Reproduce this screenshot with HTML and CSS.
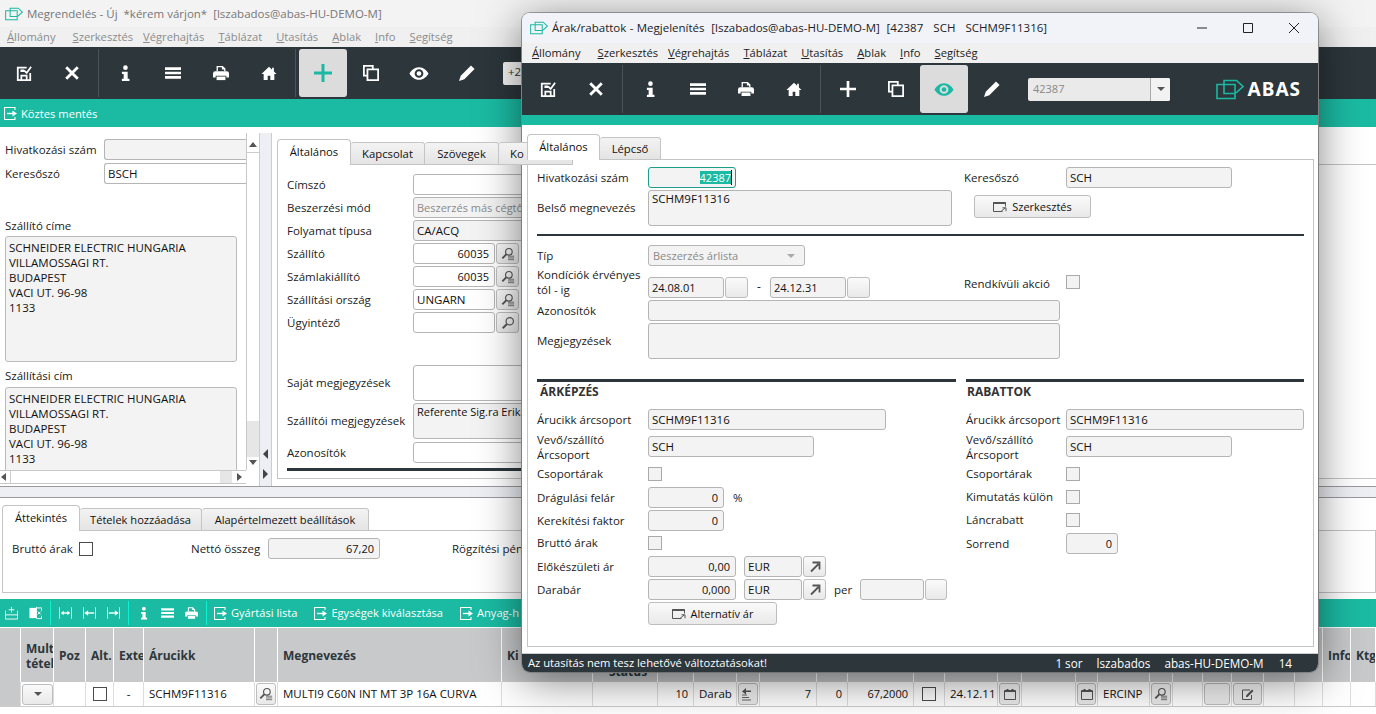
FILE: index.html
```html
<!DOCTYPE html>
<html lang="hu">
<head>
<meta charset="utf-8">
<title>Megrendelés</title>
<link rel="stylesheet" href="styles.css">
</head>
<body>
<svg class="sprite" xmlns="http://www.w3.org/2000/svg">
  <symbol id="i-save" viewBox="0 0 18 18"><path d="M1 2h11v2H3v12h2v-5h8v5h2V9h2v9H1z M7 13v3h4v-3z M5 5h4v3H5z" fill="currentColor"/><path d="M9 6l3 3 5-7" fill="none" stroke="currentColor" stroke-width="2"/></symbol>
  <symbol id="i-x" viewBox="0 0 18 18"><path d="M2.500 2.500l13 13M15.500 2.500l-13 13" fill="none" stroke="currentColor" stroke-width="3.200"/></symbol>
  <symbol id="i-info" viewBox="0 0 18 18"><circle cx="9.500" cy="3" r="2.600" fill="currentColor"/><path d="M5.500 7.500h6.500v8h2V18H5.500v-2.500h2v-5.500h-2z" fill="currentColor"/></symbol>
  <symbol id="i-menu" viewBox="0 0 18 18"><path d="M0 2.500h18v3H0zM0 7.500h18v3H0zM0 12.500h18v3H0z" fill="currentColor"/></symbol>
  <symbol id="i-print" viewBox="0 0 18 18"><path d="M4 7V1h7l3 3v3h-1.500V5H10V2.500H5.500V7z" fill="currentColor"/><path d="M2.500 7h13A2.500 2.500 0 0 1 18 9.500V14h-3v-2H3v2H0V9.500A2.500 2.500 0 0 1 2.500 7z" fill="currentColor"/><path d="M4 13h10v4H4z" fill="currentColor"/></symbol>
  <symbol id="i-home" viewBox="0 0 18 18"><path d="M9 2L0.500 10H3v7h4.500v-5h3v5H15v-7h2.500l-3-2.800V3h-2v2.400z" fill="currentColor"/></symbol>
  <symbol id="i-plus" viewBox="0 0 18 18"><path d="M7.500 0h3v7.500H18v3h-7.500V18h-3v-7.500H0v-3h7.500z" fill="currentColor"/></symbol>
  <symbol id="i-copy" viewBox="0 0 18 18"><path d="M0 0h12v4h-2V2H2v9h2v2H0z M4 4h14v14H4z M6 6v10h10V6z" fill="currentColor" fill-rule="evenodd"/></symbol>
  <symbol id="i-eye" viewBox="0 0 22 16"><path d="M11 1C6 1 2.500 4.500 0.500 8c2 3.500 5.500 7 10.500 7s8.500-3.500 10.500-7C19.500 4.500 16 1 11 1z M11 3.200a4.800 4.800 0 1 1 0 9.600 4.800 4.800 0 0 1 0-9.600z" fill="currentColor" fill-rule="evenodd"/><circle cx="11" cy="8" r="2.600" fill="currentColor"/></symbol>
  <symbol id="i-pen" viewBox="0 0 18 18"><path d="M13.500 .5l4 4L6 16 0 18l2-6z" fill="currentColor"/></symbol>
  <symbol id="i-find" viewBox="0 0 16 16"><circle cx="9" cy="5.500" r="3.800" fill="none" stroke="currentColor" stroke-width="1.300"/><path d="M6 8.500L1.500 13" stroke="currentColor" stroke-width="2.200"/><path d="M8 10.500h7M8 12.500h7M8 14.500h7" stroke="currentColor" stroke-width=".9"/></symbol>
  <symbol id="i-search" viewBox="0 0 16 16"><circle cx="10" cy="6" r="4.200" fill="none" stroke="currentColor" stroke-width="1.300"/><path d="M6.800 9.200L2 14" stroke="currentColor" stroke-width="2.200"/></symbol>
  <symbol id="i-exit" viewBox="0 0 14 13"><path d="M11 3V.5H.5v12H11V10" fill="none" stroke="currentColor" stroke-width="1.100"/><path d="M3 6.500h8" stroke="currentColor" stroke-width="1.400"/><path d="M8.500 3.500l4.500 3-4.500 3z" fill="currentColor"/></symbol>
  <symbol id="i-win" viewBox="0 0 14 12"><path d="M9.500 10.500H.5v-9h12v4" fill="none" stroke="currentColor"/><path d="M.5 1h12v2H.5z" fill="currentColor"/><path d="M8 10.500l4-3.500M9.500 6.800H13V10.200" fill="none" stroke="currentColor"/></symbol>
  <symbol id="i-arrow" viewBox="0 0 12 12"><path d="M2 10.500L9.500 3M3.500 1.500h7v7" fill="none" stroke="currentColor" stroke-width="1.800"/></symbol>
  <symbol id="i-cal" viewBox="0 0 14 14"><path d="M1.500 3.500h11v9h-11z" fill="none" stroke="currentColor"/><path d="M2 3.500h10v1.500H2zM3.500 2h2v2h-2zM8.500 2h2v2h-2z" fill="currentColor"/></symbol>
  <symbol id="i-edit" viewBox="0 0 14 12"><path d="M9 2H1.500v9.500h9V7" fill="none" stroke="currentColor"/><path d="M5 7.500L11 1.500l1.500 1.500-6 6H5z" fill="currentColor"/></symbol>
  <symbol id="i-move" viewBox="0 0 14 14"><path d="M4 3.500h5V1l4 3.500-4 3V5H4z" fill="currentColor" transform="matrix(-1 0 0 1 14 0)"/><path d="M1 8h5M1 10.500h7M1 13h9" stroke="currentColor" stroke-width=".9"/></symbol>
  <symbol id="i-addrow" viewBox="0 0 14 14"><path d="M.5 4.500v9h13v-9M.5 9h13" fill="none" stroke="currentColor"/><path d="M7 .5v6M4 3.500h6" stroke="currentColor"/></symbol>
  <symbol id="i-delrow" viewBox="0 0 14 14"><path d="M.5 1.500h8v11h-8z" fill="currentColor"/><path d="M8 .5v1h5.500v3M8 13h5.500v-3" fill="none" stroke="currentColor"/><path d="M9.500 5.500l3 3M12.500 5.500l-3 3" stroke="currentColor"/></symbol>
  <symbol id="i-cols" viewBox="0 0 14 14"><path d="M.5 1v12M13.500 1v12" stroke="currentColor"/><path d="M3 7h8" stroke="currentColor" stroke-width="1.500"/><path d="M5 4.500L2 7l3 2.500zM9 4.500L12 7l-3 2.500z" fill="currentColor"/></symbol>
  <symbol id="i-colr" viewBox="0 0 14 14"><path d="M.5 1v12M13.500 1v12" stroke="currentColor"/><path d="M3 7h9" stroke="currentColor" stroke-width="1.500"/><path d="M5.500 4L1.500 7l4 3z" fill="currentColor"/></symbol>
  <symbol id="i-coll" viewBox="0 0 14 14"><path d="M.5 1v12M13.500 1v12" stroke="currentColor"/><path d="M2 7h9" stroke="currentColor" stroke-width="1.500"/><path d="M8.500 4l4 3-4 3z" fill="currentColor"/></symbol>
  <symbol id="i-logo" viewBox="0 0 28 21"><path d="M8 5V1.500h12.500L27 7.500 20.500 13.500H19" fill="none" stroke="currentColor" stroke-width="1.600"/><path d="M1 5.500h18v14H1z" fill="none" stroke="currentColor" stroke-width="1.600"/><path d="M8 5.500v9h11" fill="none" stroke="currentColor" stroke-width="1.600"/></symbol>
</svg>

<div class="win back">
  <header class="title">
    <svg class="tlogo"><use href="#i-logo"/></svg>
    <span class="ttext">Megrendelés - Új &nbsp;*kérem várjon* &nbsp;[lszabados@abas-HU-DEMO-M]</span>
  </header>
  <nav class="menu">
    <span><u>Á</u>llomány</span><span><u>S</u>zerkesztés</span><span><u>V</u>égrehajtás</span><span><u>T</u>áblázat</span><span><u>U</u>tasítás</span><span><u>A</u>blak</span><span><u>I</u>nfo</span><span><u>S</u>egítség</span>
  </nav>
  <div class="tools">
    <span class="tb"><svg class="ico"><use href="#i-save"/></svg></span>
    <span class="tb"><svg class="ico"><use href="#i-x"/></svg></span>
    <span class="sep"></span>
    <span class="tb"><svg class="ico"><use href="#i-info"/></svg></span>
    <span class="tb"><svg class="ico"><use href="#i-menu"/></svg></span>
    <span class="tb"><svg class="ico"><use href="#i-print"/></svg></span>
    <span class="tb"><svg class="ico"><use href="#i-home"/></svg></span>
    <span class="sep sep3"></span>
    <span class="tb on"><svg class="ico big"><use href="#i-plus"/></svg></span>
    <span class="tb"><svg class="ico"><use href="#i-copy"/></svg></span>
    <span class="tb"><svg class="ico wide"><use href="#i-eye"/></svg></span>
    <span class="tb"><svg class="ico"><use href="#i-pen"/></svg></span>
    <span class="combo-b">+2</span>
  </div>
  <div class="greenbar"><svg class="gi"><use href="#i-exit"/></svg>Köztes mentés</div>

  <div class="split">
    <section class="lpane">
      <div class="lscroll">
        <div class="lfields">
          <div class="lrow r1"><span class="ll">Hivatkozási szám</span><span class="f ro lf"></span></div>
          <div class="lrow r2"><span class="ll">Keresőszó</span><span class="f lf">BSCH</span></div>
          <div class="lhead h1">Szállító címe</div>
          <div class="addr a1 ro">SCHNEIDER ELECTRIC HUNGARIA<br>VILLAMOSSAGI RT.<br>BUDAPEST<br>VACI UT. 96-98<br>1133</div>
          <div class="lhead h2">Szállítási cím</div>
          <div class="addr a2 ro">SCHNEIDER ELECTRIC HUNGARIA<br>VILLAMOSSAGI RT.<br>BUDAPEST<br>VACI UT. 96-98<br>1133</div>
        </div>
        <div class="vs"><i class="up"></i><b></b><em></em><i class="dn"></i></div>
      </div>
      <div class="hs"><i class="lt"></i><b></b><em></em><i class="rt"></i></div>
    </section>
    <div class="vsplit"><i class="lt"></i><i class="rt"></i></div>
    <section class="rpane">
      <div class="tabs">
        <span class="tab act w74">Általános</span><span class="tab w74">Kapcsolat</span><span class="tab w74">Szövegek</span><span class="tab w74 tcut">Ko</span>
      </div>
      <div class="panel">
        <div class="prow"><span class="pl">Címszó</span><span class="f pf"></span></div>
        <div class="prow"><span class="pl">Beszerzési mód</span><span class="f pf ro dim">Beszerzés más cégtől</span></div>
        <div class="prow"><span class="pl">Folyamat típusa</span><span class="f pf ro">CA/ACQ</span></div>
        <div class="prow"><span class="pl">Szállító</span><span class="f n82 rt-t">60035</span><span class="btn b23"><svg class="bi"><use href="#i-find"/></svg></span></div>
        <div class="prow"><span class="pl">Számlakiállító</span><span class="f n82 rt-t">60035</span><span class="btn b23"><svg class="bi"><use href="#i-find"/></svg></span></div>
        <div class="prow"><span class="pl">Szállítási ország</span><span class="f n82">UNGARN</span><span class="btn b23"><svg class="bi"><use href="#i-find"/></svg></span></div>
        <div class="prow"><span class="pl">Ügyintéző</span><span class="f n82"></span><span class="btn b23"><svg class="bi"><use href="#i-search"/></svg></span></div>
        <div class="prow tall g1"><span class="pl">Saját megjegyzések</span><span class="f pf area"></span></div>
        <div class="prow tall g2"><span class="pl">Szállítói megjegyzések</span><span class="f pf area ro narrow">Referente Sig.ra Erika</span></div>
        <div class="prow"><span class="pl">Azonosítók</span><span class="f pf"></span></div>
        <div class="hr phr"></div>
      </div>
    </section>
  </div>
  <div class="hsplit"></div>

  <div class="tabs2">
    <span class="tab act w78">Áttekintés</span><span class="tab w122">Tételek hozzáadása</span><span class="tab w167">Alapértelmezett beállítások</span>
  </div>
  <div class="summary">
    <span class="sl1">Bruttó árak</span><span class="chk dark schk"></span>
    <span class="sl2">Nettó összeg</span><span class="f ro sumf rt-t">67,20</span>
    <span class="sl3">Rögzítési pén</span>
  </div>

  <div class="gtools">
    <svg class="gt"><use href="#i-addrow"/></svg><svg class="gt"><use href="#i-delrow"/></svg><span class="gsep"></span>
    <svg class="gt"><use href="#i-cols"/></svg><svg class="gt"><use href="#i-colr"/></svg><svg class="gt"><use href="#i-coll"/></svg><span class="gsep"></span>
    <svg class="gt"><use href="#i-info"/></svg><svg class="gt"><use href="#i-menu"/></svg><svg class="gt"><use href="#i-print"/></svg><span class="gsep"></span>
    <span class="gl"><svg class="gi"><use href="#i-exit"/></svg>Gyártási lista</span>
    <span class="gl"><svg class="gi"><use href="#i-exit"/></svg>Egységek kiválasztása</span>
    <span class="gl"><svg class="gi"><use href="#i-exit"/></svg>Anyag-h</span>
  </div>

  <div class="grid ghead">
    <span></span><span class="two">Mult<br>tétel</span><span>Poz</span><span>Alt.</span><span>Exte</span><span>Árucikk</span><span></span><span>Megnevezés</span><span>Ki</span><span class="low">Status</span><span></span><span></span><span></span><span></span><span></span><span></span><span></span><span></span><span></span><span></span><span></span><span></span><span></span><span></span><span></span><span></span><span></span><span>Ext</span><span>Info</span><span>Ktg</span>
  </div>
  <div class="grid grow">
    <span class="stub"></span>
    <span class="c0"><span class="btn ddb"><i class="tri"></i></span></span>
    <span></span>
    <span class="cc"><span class="chk dark"></span></span>
    <span class="cc">-</span>
    <span class="pad">SCHM9F11316</span>
    <span class="c0"><span class="btn fillb"><svg class="bi"><use href="#i-find"/></svg></span></span>
    <span class="pad">MULTI9 C60N INT MT 3P 16A CURVA</span>
    <span></span>
    <span></span>
    <span class="rgt">10</span>
    <span class="pad">Darab</span>
    <span class="c0"><span class="btn fillb"><svg class="bi"><use href="#i-move"/></svg></span></span>
    <span class="rgt">7</span>
    <span class="rgt">0</span>
    <span class="rgt">67,2000</span>
    <span class="cc"><span class="chk dark"></span></span>
    <span class="pad">24.12.11</span>
    <span class="c0"><span class="btn fillb"><svg class="bi"><use href="#i-cal"/></svg></span></span>
    <span></span>
    <span class="c0"><span class="btn fillb"><svg class="bi"><use href="#i-cal"/></svg></span></span>
    <span class="pad">ERCINP</span>
    <span class="c0"><span class="btn fillb"><svg class="bi"><use href="#i-find"/></svg></span></span>
    <span></span>
    <span class="c0"><span class="btn fillb"></span></span>
    <span class="c0"><span class="btn fillb"><svg class="bi"><use href="#i-edit"/></svg></span></span>
    <span></span><span></span><span></span><span></span>
  </div>
</div>

<div class="win front">
  <header class="title ftitle">
    <svg class="tlogo"><use href="#i-logo"/></svg>
    <span class="ttext">Árak/rabattok - Megjelenítés &nbsp;[lszabados@abas-HU-DEMO-M] &nbsp;[42387 &nbsp; SCH &nbsp; SCHM9F11316]</span>
    <span class="wbtns">
      <svg class="wb"><path d="M1 6h10" stroke="#222" fill="none"/></svg>
      <svg class="wb"><path d="M1.500 1.500h9v9h-9z" stroke="#222" fill="none"/></svg>
      <svg class="wb"><path d="M1 1l10 10M11 1L1 11" stroke="#222" fill="none"/></svg>
    </span>
  </header>
  <nav class="menu fmenu">
    <span><u>Á</u>llomány</span><span><u>S</u>zerkesztés</span><span><u>V</u>égrehajtás</span><span><u>T</u>áblázat</span><span><u>U</u>tasítás</span><span><u>A</u>blak</span><span><u>I</u>nfo</span><span><u>S</u>egítség</span>
  </nav>
  <div class="tools ftools">
    <span class="tb"><svg class="ico"><use href="#i-save"/></svg></span>
    <span class="tb"><svg class="ico"><use href="#i-x"/></svg></span>
    <span class="sep sep3"></span>
    <span class="tb"><svg class="ico"><use href="#i-info"/></svg></span>
    <span class="tb"><svg class="ico"><use href="#i-menu"/></svg></span>
    <span class="tb"><svg class="ico"><use href="#i-print"/></svg></span>
    <span class="tb"><svg class="ico"><use href="#i-home"/></svg></span>
    <span class="sep sep3"></span>
    <span class="tb"><svg class="ico"><use href="#i-plus"/></svg></span>
    <span class="tb"><svg class="ico"><use href="#i-copy"/></svg></span>
    <span class="tb on"><svg class="ico wide"><use href="#i-eye"/></svg></span>
    <span class="tb"><svg class="ico"><use href="#i-pen"/></svg></span>
    <span class="combo"><span class="ctext">42387</span><span class="carrow"><i class="tri"></i></span></span>
    <span class="brand"><svg class="blogo"><use href="#i-logo"/></svg><span class="bname">ABAS</span></span>
  </div>
  <div class="fgreen"></div>

  <div class="fbody">
    <div class="tabs ftabs"><span class="tab act w73">Általános</span><span class="tab w61">Lépcső</span></div>
    <div class="fpanel">
      <div class="ftop">
        <div class="ftl">
          <div class="row"><span class="lbl">Hivatkozási szám</span><span class="f ro focus w88 rt-t"><span class="sel">42387</span><span class="caret"></span></span></div>
          <div class="row tall36 mt2"><span class="lbl">Belső megnevezés</span><span class="f ro area w304">SCHM9F11316</span></div>
        </div>
        <div class="ftr">
          <div class="row"><span class="lbl2">Keresőszó</span><span class="f ro w166">SCH</span></div>
          <div class="row mt8"><span class="btn cmd w117"><svg class="bi2"><use href="#i-win"/></svg>Szerkesztés</span></div>
        </div>
      </div>
      <div class="hr thin fhr1"></div>
      <div class="row mt9"><span class="lbl">Típ</span><span class="f ro dim w157 ddn">Beszerzés árlista<i class="tri lite"></i></span></div>
      <div class="row mt11">
        <span class="lbl twol up4">Kondíciók érvényes<br>tól - ig</span>
        <span class="f ro w76 date">24.08.01</span><span class="btn eb23"></span>
        <span class="dash">-</span>
        <span class="f ro w76 date">24.12.31</span><span class="btn eb23"></span>
        <span class="rend"><span class="lbl2">Rendkívüli akció</span><span class="chk lt-c"></span></span>
      </div>
      <div class="row mt2"><span class="lbl">Azonosítók</span><span class="f ro w412"></span></div>
      <div class="row tall36 mt2"><span class="lbl">Megjegyzések</span><span class="f ro area w412"></span></div>

      <div class="fcols">
        <div class="fcl">
          <div class="hr"></div>
          <h3 class="sect">ÁRKÉPZÉS</h3>
          <div class="row"><span class="lbl">Árucikk árcsoport</span><span class="f ro w238">SCHM9F11316</span></div>
          <div class="row mt6"><span class="lbl twol">Vevő/szállító<br>Árcsoport</span><span class="f ro w166">SCH</span></div>
          <div class="row chkrow ck10"><span class="lbl">Csoportárak</span><span class="chk lt-c"></span></div>
          <div class="row mt2"><span class="lbl">Drágulási felár</span><span class="f ro w76 rt-t">0</span><span class="unit">%</span></div>
          <div class="row mt2"><span class="lbl">Kerekítési faktor</span><span class="f ro w76 rt-t">0</span></div>
          <div class="row chkrow ck5"><span class="lbl">Bruttó árak</span><span class="chk lt-c"></span></div>
          <div class="row mt2"><span class="lbl">Előkészületi ár</span><span class="f ro w88 rt-t">0,00</span><span class="f ro w58 ml8">EUR</span><span class="btn eb23"><svg class="bi3"><use href="#i-arrow"/></svg></span></div>
          <div class="row mt2"><span class="lbl">Darabár</span><span class="f ro w88 rt-t">0,000</span><span class="f ro w58 ml8">EUR</span><span class="btn eb23"><svg class="bi3"><use href="#i-arrow"/></svg></span><span class="per">per</span><span class="f ro w64"></span><span class="btn eb22"></span></div>
          <div class="row cmdrow mt2"><span class="lbl"></span><span class="btn cmd w129"><svg class="bi2"><use href="#i-win"/></svg>Alternatív ár</span></div>
        </div>
        <div class="fcr">
          <div class="hr"></div>
          <h3 class="sect sect2">RABATTOK</h3>
          <div class="row"><span class="lbl3">Árucikk árcsoport</span><span class="f ro w238">SCHM9F11316</span></div>
          <div class="row mt6"><span class="lbl3 twol">Vevő/szállító<br>Árcsoport</span><span class="f ro w166">SCH</span></div>
          <div class="row chkrow ck10"><span class="lbl3">Csoportárak</span><span class="chk lt-c"></span></div>
          <div class="row chkrow ck5"><span class="lbl3">Kimutatás külön</span><span class="chk lt-c"></span></div>
          <div class="row chkrow ck5"><span class="lbl3">Láncrabatt</span><span class="chk lt-c"></span></div>
          <div class="row mt2"><span class="lbl3">Sorrend</span><span class="f ro w52 rt-t">0</span></div>
        </div>
      </div>
    </div>
  </div>
  <footer class="status">
    <span class="smsg">Az utasítás nem tesz lehetővé változtatásokat!</span>
    <span class="s1">1 sor</span><span class="s2">lszabados</span><span class="s3">abas-HU-DEMO-M</span><span class="s4">14</span>
  </footer>
</div>
</body>
</html>
```
FILE: styles.css
```css
* { box-sizing: border-box; }
html, body { margin: 0; height: 100%; overflow: hidden; }
body { width: 1376px; height: 714px; position: relative; background: #fff; font: 11.5px/1.2 "Open Sans", "Noto Sans", sans-serif; color: #222; }
.sprite { position: absolute; width: 0; height: 0; }
u { text-decoration: underline; }
i, em { font-style: normal; display: block; }

.win { position: absolute; background: #fff; }
.back { left: 0; top: 0; width: 1376px; height: 714px; overflow: hidden; }
.front { left: 522px; top: 13px; width: 796px; height: 659px; border-radius: 8px; overflow: hidden; box-shadow: 0 8px 44px rgba(0,0,0,.5), 0 0 0 1px #a9a9a9; }

/* title + menu */
.title { height: 27px; background: #f3f3f3; display: flex; align-items: center; padding-left: 5px; color: #777; font-size: 11.5px; }
.tlogo { width: 18px; height: 14px; color: #1bb9a3; margin-right: 4px; flex: none; }
.ttext { white-space: nowrap; }
.ftitle { height: 30px; background: #f1f3f9; color: #222; padding-left: 8px; }
.ftitle .ttext { word-spacing: .4px; }
.wbtns { margin-left: auto; display: flex; }
.wb { width: 12px; height: 12px; margin: 0 18px 1px 0; }
.wb:first-child { margin-right: 34px; }
.wb:nth-child(2) { margin-right: 34px; }
.menu { height: 20px; background: #f0f0f0; display: flex; align-items: center; padding-left: 7px; color: #8c8c8c; font-size: 11.2px; gap: 14px; white-space: nowrap; }
.menu span:first-child { margin-right: 3px; }
.menu span:nth-child(2) { margin-right: -4px; }
.fmenu { color: #222; padding-left: 10px; }

/* toolbars */
.tools { height: 52px; background: #2c363b; display: flex; align-items: center; padding: 0; color: #fff; position: relative; }
.ftools { padding-left: 2px; }
.tb { width: 48px; height: 48px; display: flex; align-items: center; justify-content: center; flex: none; border-radius: 3px; }
.tb.on { background: #dcdcdc; color: #1bb9a3; }
.ico { width: 16px; height: 16px; }
.ico.big { width: 18px; height: 18px; }
.ico.wide { width: 20px; height: 15px; }
.sep { width: 1px; height: 48px; background: #48535a; margin: 0 2px; flex: none; }
.sep3 { margin-right: 3px; }
.combo-b { margin-left: 12px; width: 60px; height: 23px; background: #f5f5f5; border-radius: 2px; color: #333; padding: 3px 5px; }
.combo { margin-left: 12px; width: 142px; height: 23px; background: #eaeaea; border-radius: 2px; display: flex; color: #888; font-size: 11px; }
.ctext { flex: 1; padding: 4px 5px; }
.carrow { width: 20px; border-left: 1px solid #aaa; background: #f2f2f2; display: flex; align-items: center; justify-content: center; border-radius: 0 2px 2px 0; }
.tri { width: 0; height: 0; border: 4px solid transparent; border-top: 4px solid #555; border-bottom: 0; }
.tri.lite { border-top-color: #aaa; margin: 0 6px 0 auto; }
.brand { margin-left: auto; margin-right: 17px; display: flex; align-items: center; gap: 4px; }
.blogo { width: 28px; height: 21px; color: #1bb9a3; }
.bname { font: 700 19px/1 "Noto Sans", sans-serif; letter-spacing: 1px; color: #fff; }
.greenbar { height: 28px; background: #1bbba3; color: #fff; display: flex; align-items: center; font-size: 11.2px; padding: 1px 0 0 4px; gap: 3px; }
.fgreen { height: 10px; background: #1bbba3; }
.gi { width: 14px; height: 13px; flex: none; }

/* fields */
.f { display: flex; align-items: center; height: 21px; border: 1px solid #b5b5b5; border-radius: 3px; background: #fff; padding: 0 3px; color: #111; font-size: 11.5px; white-space: nowrap; overflow: hidden; flex: none; }
.ro { background: #f3f3f3; }
.dim { color: #8a8a8a; font-size: 11px; }
.narrow { font-size: 11px; }
.rt-t { justify-content: flex-end; padding-right: 5px; font-size: 11px; }
.area { height: 36px; align-items: flex-start; padding-top: 1px; }
.btn { display: flex; align-items: center; justify-content: center; flex: none; border: 1px solid #bdbdbd; border-radius: 3px; background: linear-gradient(#fafafa, #e9e9e9); color: #555; }
.bi { width: 14px; height: 14px; color: #555; }
.chk { width: 14px; height: 14px; border: 1px solid #555; background: #fff; flex: none; display: block; }
.chk.dark { border-color: #4c4c4c; }
.lt-c { border-color: #aaa; background: #f3f3f3; }

/* splits */
.split { height: 359px; display: flex; }
.lpane { width: 259px; flex: none; display: flex; flex-direction: column; }
.lscroll { height: 343px; display: flex; overflow: hidden; }
.lfields { width: 246px; flex: none; padding: 12px 0 0 5px; overflow: hidden; }
.lrow { display: flex; align-items: center; height: 21px; }
.r2 { margin-top: 3px; }
.ll { width: 99px; flex: none; font-size: 11.5px; }
.lf { width: 142px; border-radius: 3px 0 0 3px; border-right: 0; }
.lhead { font-size: 11.5px; height: 15px; line-height: 15px; }
.h1 { margin-top: 34px; }
.h2 { margin-top: 6px; }
.addr { border: 1px solid #bbb; border-radius: 3px; width: 232px; padding: 3px; line-height: 15px; font-size: 11.5px; color: #111; }
.a1 { height: 126px; margin-top: 3px; }
.a2 { height: 100px; margin-top: 4px; }
.vs { width: 13px; flex: none; display: flex; flex-direction: column; margin-top: 6px; border-left: 1px solid #c8c8c8; background: #fff; }
.vs .up, .vs .dn { position: relative; flex: none; }
.vs .up { height: 20px; border-bottom: 1px solid #ccc; }
.vs .dn { height: 13px; }
.vs .up::after, .vs .dn::after, .hs .lt::after, .hs .rt::after { content: ""; position: absolute; border: 4px solid transparent; left: 2px; }
.vs .up::after { top: 9px; border-bottom: 5px solid #555; border-top: 0; }
.vs .dn::after { top: 3px; border-top: 5px solid #555; border-bottom: 0; }
.vs b { display: block; flex: 1; }
.vs em { height: 36px; background: #e6e6e6; }
.hs { height: 14px; display: flex; width: 246px; flex: none; border-top: 1px solid #c8c8c8; border-bottom: 1px solid #c8c8c8; }
.hs .lt { width: 10px; position: relative; flex: none; }
.hs .rt { width: 14px; position: relative; flex: none; }
.hs .lt::after { left: 1px; top: 2px; border-right: 5px solid #555; border-left: 0; }
.hs .rt::after { left: 5px; top: 2px; border-left: 5px solid #555; border-right: 0; }
.hs b { flex: 1; border-left: 1px solid #ccc; }
.hs em { width: 12px; background: #e6e6e6; }
.vsplit { width: 13px; flex: none; margin-top: 6px; background: #eeeff5; border-left: 1px solid #ccc; border-right: 1px solid #ccc; display: flex; flex-direction: column; align-items: center; justify-content: flex-end; gap: 10px; padding: 0 0 7px; }
.vsplit .lt { border: 5px solid transparent; border-right: 5px solid #444; border-left: 0; }
.vsplit .rt { border: 5px solid transparent; border-left: 5px solid #444; border-right: 0; }
.rpane { flex: 1; padding: 12px 0 0 5px; min-width: 0; }
.hsplit { height: 12px; background: #eeeff5; border-top: 1px solid #9a9a9a; border-bottom: 1px solid #9a9a9a; }

/* tabs */
.tabs, .tabs2 { display: flex; align-items: flex-end; height: 26px; position: relative; z-index: 1; }
.tab { height: 23px; display: flex; align-items: center; justify-content: center; background: linear-gradient(#f3f3f3, #e4e4e4); border: 1px solid #c4c4c4; border-left: 0; border-bottom: 1px solid #c4c4c4; border-radius: 3px 3px 0 0; font-size: 11.3px; color: #111; flex: none; }
.tab.act { height: 26px; background: #fff; border-left: 1px solid #c4c4c4; border-bottom: 0; padding-bottom: 1px; border-radius: 4px 4px 0 0; }
.tab.tcut { justify-content: flex-start; padding-left: 11px; }
.w74 { width: 74px; } .w73 { width: 73px; } .w61 { width: 61px; }
.w78 { width: 78px; } .w122 { width: 122px; } .w167 { width: 167px; }
.panel { height: 315px; border: 1px solid #c4c4c4; margin-top: -1px; padding: 9px 0 0 9px; width: 1100px; }
.prow { display: flex; align-items: center; height: 21px; margin-bottom: 2px; }
.pl { width: 126px; flex: none; font-size: 11.5px; }
.pf { width: 300px; }
.n82 { width: 82px; }
.b23 { width: 23px; height: 21px; margin-left: 1px; }
.prow.tall { height: 36px; }
.g1 { margin-top: 32px; }
.g2 { margin-bottom: 3px; }
.phr { margin: 5px 0 0; width: 300px; height: 2px; }
.hr { height: 3px; background: #2c363b; }
.hr.thin { height: 2px; }

/* summary */
.tabs2 { padding-left: 2px; margin-top: 7px; }
.tabs2 .tab { font-size: 11.1px; }
.summary { height: 63px; margin: -1px 0 0 2px; border: 1px solid #c4c4c4; display: flex; align-items: flex-start; padding-top: 7px; width: 1374px; font-size: 11.5px; line-height: 21px; }
.sl1 { margin-left: 9px; width: 67px; flex: none; }
.schk { margin-top: 4px; }
.sl2 { margin-left: 98px; width: 77px; flex: none; }
.sumf { width: 112px; }
.sl3 { margin-left: 72px; }

/* green grid toolbar */
.gtools { margin-top: 6px; height: 28px; background: #1bbba3; color: #fff; display: flex; align-items: center; padding-left: 5px; white-space: nowrap; font-size: 11.1px; }
.gt { width: 13px; height: 14px; flex: none; margin-right: 11px; }
.gsep { width: 1px; height: 24px; background: #0ff0d0; flex: none; margin: 0 8px 0 -3px; }
.gl { display: inline-flex; align-items: center; gap: 3px; margin-right: 17px; }
.gsep + .gl { margin-left: -1px; }

/* table */
.grid { display: grid; grid-template-columns: 21px 33px 32px 28px 30px 111px 23px 224px 91px 65px 36px 43px 23px 57px 31px 66px 31px 53px 24px 54px 22px 52px 23px 30px 29px 32px 31px 28px 28px 25px; }
.ghead { height: 54px; background: #c8c9ca; margin-top: 1px; font-weight: 700; color: #2c363b; font-size: 12px; }
.ghead > span { border-right: 1px solid #fff; display: flex; align-items: center; padding: 2px 0 0 5px; overflow: hidden; white-space: nowrap; }
.ghead .two { line-height: 15px; }
.ghead .low { align-items: flex-end; padding: 0 0 3px 16px; }
.grow { height: 25px; border-bottom: 1px solid #ccc; font-size: 11.5px; color: #111; }
.grow > span { border-right: 1px solid #ddd; display: flex; align-items: center; white-space: nowrap; overflow: hidden; }
.grow .stub { background: #c8c9ca; }
.pad { padding-left: 5px; }
.rgt { justify-content: flex-end; padding-right: 5px; font-size: 11px; }
.grow .cc { justify-content: center; }
.c0 { padding: 1px; }
.ddb { width: 31px; height: 21px; }
.fillb { width: 100%; height: 22px; }

/* front body */
.fbody { height: 529px; padding: 9px 4px 0 5px; background: #fff; border-bottom: 1px solid #ccc; }
.ftabs { height: 26px; }
.fpanel { height: 488px; margin-top: -1px; border: 1px solid #c4c4c4; padding: 7px 9px 0 9px; }
.row { display: flex; align-items: center; height: 21px; flex: none; }
.tall36 { height: 36px; }
.lbl { width: 111px; flex: none; font-size: 11.5px; }
.lbl2 { width: 102px; flex: none; font-size: 11.5px; }
.lbl3 { width: 100px; flex: none; font-size: 11.5px; }
.twol { line-height: 15px; }
.up4 { margin-bottom: 12px; }
.mt2 { margin-top: 2px; } .mt6 { margin-top: 6px; } .mt8 { margin-top: 8px; } .mt9 { margin-top: 9px; } .mt11 { margin-top: 11px; }
.ftop { display: flex; height: 59px; }
.ftl { width: 427px; flex: none; }
.ftr { flex: 1; }
.ftr .cmd { margin-left: 10px; }
.w88 { width: 88px; } .w304 { width: 304px; } .w166 { width: 166px; } .w157 { width: 157px; } .w76 { width: 76px; } .w412 { width: 412px; } .w238 { width: 238px; } .w58 { width: 58px; } .w64 { width: 64px; } .w52 { width: 52px; }
.date { font-size: 11px; }
.focus { border-color: #1b9f8c; padding-right: 3px; }
.sel { background: #1bbba3; color: #fff; }
.caret { width: 1px; height: 15px; background: #111; }
.fhr1 { margin-top: 8px; }
.ddn { padding-left: 4px; }
.eb23 { width: 23px; height: 21px; margin-left: 1px; }
.eb22 { width: 22px; height: 21px; margin-left: 1px; }
.dash { width: 22px; text-align: center; flex: none; color: #222; font-size: 12px; }
.rend { margin-left: 94px; display: flex; align-items: flex-start; align-self: flex-start; margin-top: -2px; }
.rend .lbl2 { padding-top: 2px; }
.fcols { display: flex; gap: 10px; margin-top: 20px; }
.fcl { width: 419px; flex: none; display: flex; flex-direction: column; }
.fcr { width: 338px; flex: none; display: flex; flex-direction: column; }
.sect { margin: 0; height: 27px; padding: 2px 0 0 3px; font-size: 12px; line-height: 16px; font-weight: 700; color: #333; }
.sect2 { padding-left: 1px; }
.row.chkrow { height: 14px; margin-bottom: 4px; }
.ck10 { margin-top: 10px; }
.ck5 { margin-top: 5px; }
.unit { margin-left: 9px; font-size: 11.5px; }
.ml8 { margin-left: 8px; }
.per { margin-left: 8px; width: 26px; flex: none; font-size: 11.5px; }
.cmd { height: 23px; color: #111; font-size: 11px; gap: 5px; }
.row.cmdrow { height: 23px; }
.w117 { width: 117px; } .w129 { width: 129px; }
.bi2 { width: 14px; height: 12px; color: #555; }
.bi3 { width: 12px; height: 12px; color: #555; }

/* status bar */
.status { height: 18px; background: #2c363b; color: #fff; display: flex; align-items: center; padding: 0 26px 0 6px; font-size: 11.2px; white-space: nowrap; }
.s1, .s2, .s3, .s4 { font-size: 11.7px; }
.s1 { margin-left: auto; }
.s2 { margin-left: 14px; }
.s3 { margin-left: 14px; }
.s4 { margin-left: 15px; }
```
